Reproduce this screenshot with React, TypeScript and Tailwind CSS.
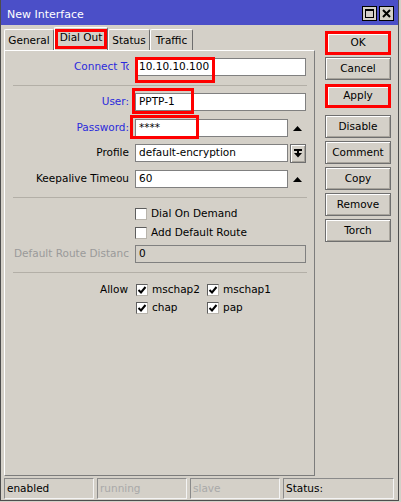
import type { ReactNode } from "react";

const face = "bg-[#d4d0c8]";
const raised = "border border-[#6f6f6f] shadow-[inset_1px_1px_0_#ffffff,inset_-1px_-1px_0_#a8a49c]";

function Check({ checked }: { checked?: boolean }) {
    return (
        <div className="w-[12px] h-[12px] border border-t-[#5e5e5e] border-l-[#5e5e5e] border-b-[#b8b4ac] border-r-[#b8b4ac] bg-white flex items-center justify-center">
            {checked && (
                <svg width="10" height="10" viewBox="0 0 10 10">
                    <path d="M1.5 5 L4 7.5 L8.5 2" fill="none" stroke="#000" strokeWidth="2" />
                </svg>
            )}
        </div>
    );
}

function UpArrow() {
    return (
        <svg width="9" height="5" viewBox="0 0 9 5" className="ml-[5px]">
            <path d="M0 5 L4.5 0 L9 5 Z" fill="#000" />
        </svg>
    );
}

function Input({ value, w, disabled }: { value: string; w: string; disabled?: boolean }) {
    return (
        <div className={`h-[18px] border border-[#808080] pl-[3px] flex items-center whitespace-nowrap ${w} ${disabled ? face : "bg-white"}`}>
            {value}
        </div>
    );
}

function Row({ label, labelClass, children, className = "" }: { label: string; labelClass: string; children: ReactNode; className?: string }) {
    return (
        <div className={`flex items-center h-[18px] ${className}`}>
            <div className="w-[125px] flex justify-end pr-[1px]">
                <span className={`whitespace-nowrap overflow-hidden ${labelClass}`}>{label}</span>
            </div>
            <div className="ml-[5px] flex items-center relative">{children}</div>
        </div>
    );
}

function Sep({ className }: { className: string }) {
    return <div className={`h-px bg-[#b3afa7] ml-[8px] mr-[7px] ${className}`} />;
}

function Red({ className }: { className: string }) {
    return <div className={`absolute border-[3px] border-[#ff0000] ${className}`} />;
}

function Btn({ text, red, h = "h-[23px]", className = "" }: { text: string; red?: boolean; h?: string; className?: string }) {
    return (
        <div
            className={`${h} flex items-center justify-center ${face} ${
                red
                    ? "border-[3px] border-[#ff0000] shadow-[inset_1px_1px_0_#ffffff]"
                    : raised
            } ${className}`}
        >
            {text}
        </div>
    );
}

function Tab({ text, w, selected }: { text: string; w: string; selected?: boolean }) {
    return (
        <div
            className={`relative ${w} ${selected ? "h-[23px] pb-[3px]" : "h-[21px] pt-[1px]"} border-t border-l border-white border-r border-r-[#6d6d6d] rounded-t-[2px] flex items-center justify-center`}
        >
            {text}
            {selected && <Red className="left-0 top-[1px] right-0 bottom-[1px]" />}
        </div>
    );
}

function StatusCell({ text, w, dim }: { text: string; w: string; dim?: boolean }) {
    return (
        <div className={`h-[21px] ${w} border border-t-[#8a8a8a] border-l-[#8a8a8a] border-b-[#f4f4f4] border-r-[#f4f4f4] pl-[2px] flex items-center ${dim ? "text-[#a9a9a9]" : "text-black"}`}>
            {text}
        </div>
    );
}

export default function App() {
    return (
        <div className={`w-[401px] h-[502px] ${face} font-['DejaVu_Sans',sans-serif] text-[10.5px] text-black`}>
            <div className="w-[399px] h-[501px] border-x border-b border-[#4d4d4d] flex flex-col">
                {/* title bar */}
                <div className="h-[25px] bg-[#4b4fc8] flex items-center pl-[6px] pr-[4px] pt-[5px]">
                    <span className="text-white text-[11px] flex-1">New Interface</span>
                    <div className="flex gap-[2px] -mt-[3px]">
                        <div className={`w-[15px] h-[15px] border border-black ${face} flex items-center justify-center`}>
                            <div className="w-[9px] h-[9px] border border-black border-t-2" />
                        </div>
                        <div className={`w-[15px] h-[15px] border border-black ${face} flex items-center justify-center`}>
                            <svg width="9" height="9" viewBox="0 0 9 9">
                                <path d="M1 1 L8 8 M8 1 L1 8" stroke="#000" strokeWidth="2" />
                            </svg>
                        </div>
                    </div>
                </div>

                <div className="flex pl-[3px] h-[451px]">
                    {/* left: tabs + panel */}
                    <div className="w-[311px] flex flex-col pt-[2px]">
                        <div className="flex items-end h-[23px]">
                            <Tab text="General" w="w-[50px]" />
                            <Tab text="Dial Out" w="w-[54px]" selected />
                            <Tab text="Status" w="w-[42px]" />
                            <Tab text="Traffic" w="w-[43px]" />
                        </div>
                        <div className="h-[426px] border border-t-white border-l-white border-b-[#7c7c7c] border-r-[#7c7c7c] pt-[7px] flex flex-col">
                            <Row label="Connect To" labelClass="max-w-[55px] text-[#2b2bdc]">
                                <Input value="10.10.10.100" w="w-[171px]" />
                                <Red className="left-0 -top-[1px] w-[80px] h-[26px]" />
                            </Row>
                            <Sep className="mt-[9px]" />
                            <Row label="User:" labelClass="text-[#2b2bdc]" className="mt-[7px]">
                                <Input value="PPTP-1" w="w-[171px]" />
                                <Red className="-left-[3px] -top-[5px] w-[62px] h-[26px]" />
                            </Row>
                            <Row label="Password:" labelClass="text-[#2b2bdc]" className="mt-[8px]">
                                <Input value="****" w="w-[153px]" />
                                <UpArrow />
                                <Red className="-left-[5px] -top-[4px] w-[69px] h-[24px]" />
                            </Row>
                            <Row label="Profile" labelClass="" className="mt-[7px]">
                                <Input value="default-encryption" w="w-[153px]" />
                                <div className={`ml-[2px] w-[16px] h-[19px] ${face} ${raised} flex items-center justify-center`}>
                                    <svg width="8" height="9" viewBox="0 0 8 9">
                                        <rect x="0" y="0" width="8" height="2" fill="#000" />
                                        <rect x="3" y="2" width="2" height="2" fill="#000" />
                                        <path d="M0 4 L8 4 L4 8.5 Z" fill="#000" />
                                    </svg>
                                </div>
                            </Row>
                            <Row label="Keepalive Timeout" labelClass="max-w-[93px]" className="mt-[8px]">
                                <Input value="60" w="w-[153px]" />
                                <UpArrow />
                            </Row>
                            <Sep className="mt-[9px]" />
                            <div className="flex items-center h-[13px] mt-[9px] pl-[130px]">
                                <Check />
                                <span className="ml-[4px]">Dial On Demand</span>
                            </div>
                            <div className="flex items-center h-[13px] mt-[6px] pl-[130px]">
                                <Check />
                                <span className="ml-[4px]">Add Default Route</span>
                            </div>
                            <Row label="Default Route Distance" labelClass="max-w-[115px] text-[#9a9a9a]" className="mt-[6px]">
                                <Input value="0" w="w-[171px]" disabled />
                            </Row>
                            <Sep className="mt-[9px]" />
                            <div className="flex items-center h-[12px] mt-[11px]">
                                <div className="w-[125px] text-right pr-[2px]">Allow</div>
                                <div className="ml-[6px] w-[71px] flex items-center">
                                    <Check checked />
                                    <span className="ml-[4px]">mschap2</span>
                                </div>
                                <div className="flex items-center">
                                    <Check checked />
                                    <span className="ml-[4px]">mschap1</span>
                                </div>
                            </div>
                            <div className="flex items-center h-[12px] mt-[6px] pl-[131px]">
                                <div className="w-[71px] flex items-center">
                                    <Check checked />
                                    <span className="ml-[4px]">chap</span>
                                </div>
                                <div className="flex items-center">
                                    <Check checked />
                                    <span className="ml-[4px]">pap</span>
                                </div>
                            </div>
                        </div>
                    </div>

                    {/* right: buttons */}
                    <div className="ml-[10px] w-[66px] pt-[6px] flex flex-col">
                        <Btn text="OK" red h="h-[24px]" />
                        <Btn text="Cancel" className="mt-[2px]" />
                        <Btn text="Apply" red h="h-[24px]" className="mt-[4px]" />
                        <Btn text="Disable" className="mt-[7px]" />
                        <Btn text="Comment" className="mt-[3px]" />
                        <Btn text="Copy" className="mt-[3px]" />
                        <Btn text="Remove" className="mt-[3px]" />
                        <Btn text="Torch" className="mt-[3px]" />
                    </div>
                </div>

                {/* status bar */}
                <div className="flex gap-[3px] pl-[3px] mt-[2px]">
                    <StatusCell text="enabled" w="w-[90px]" />
                    <StatusCell text="running" w="w-[90px]" dim />
                    <StatusCell text="slave" w="w-[90px]" dim />
                    <StatusCell text="Status:" w="w-[111px]" />
                </div>
            </div>
        </div>
    );
}
